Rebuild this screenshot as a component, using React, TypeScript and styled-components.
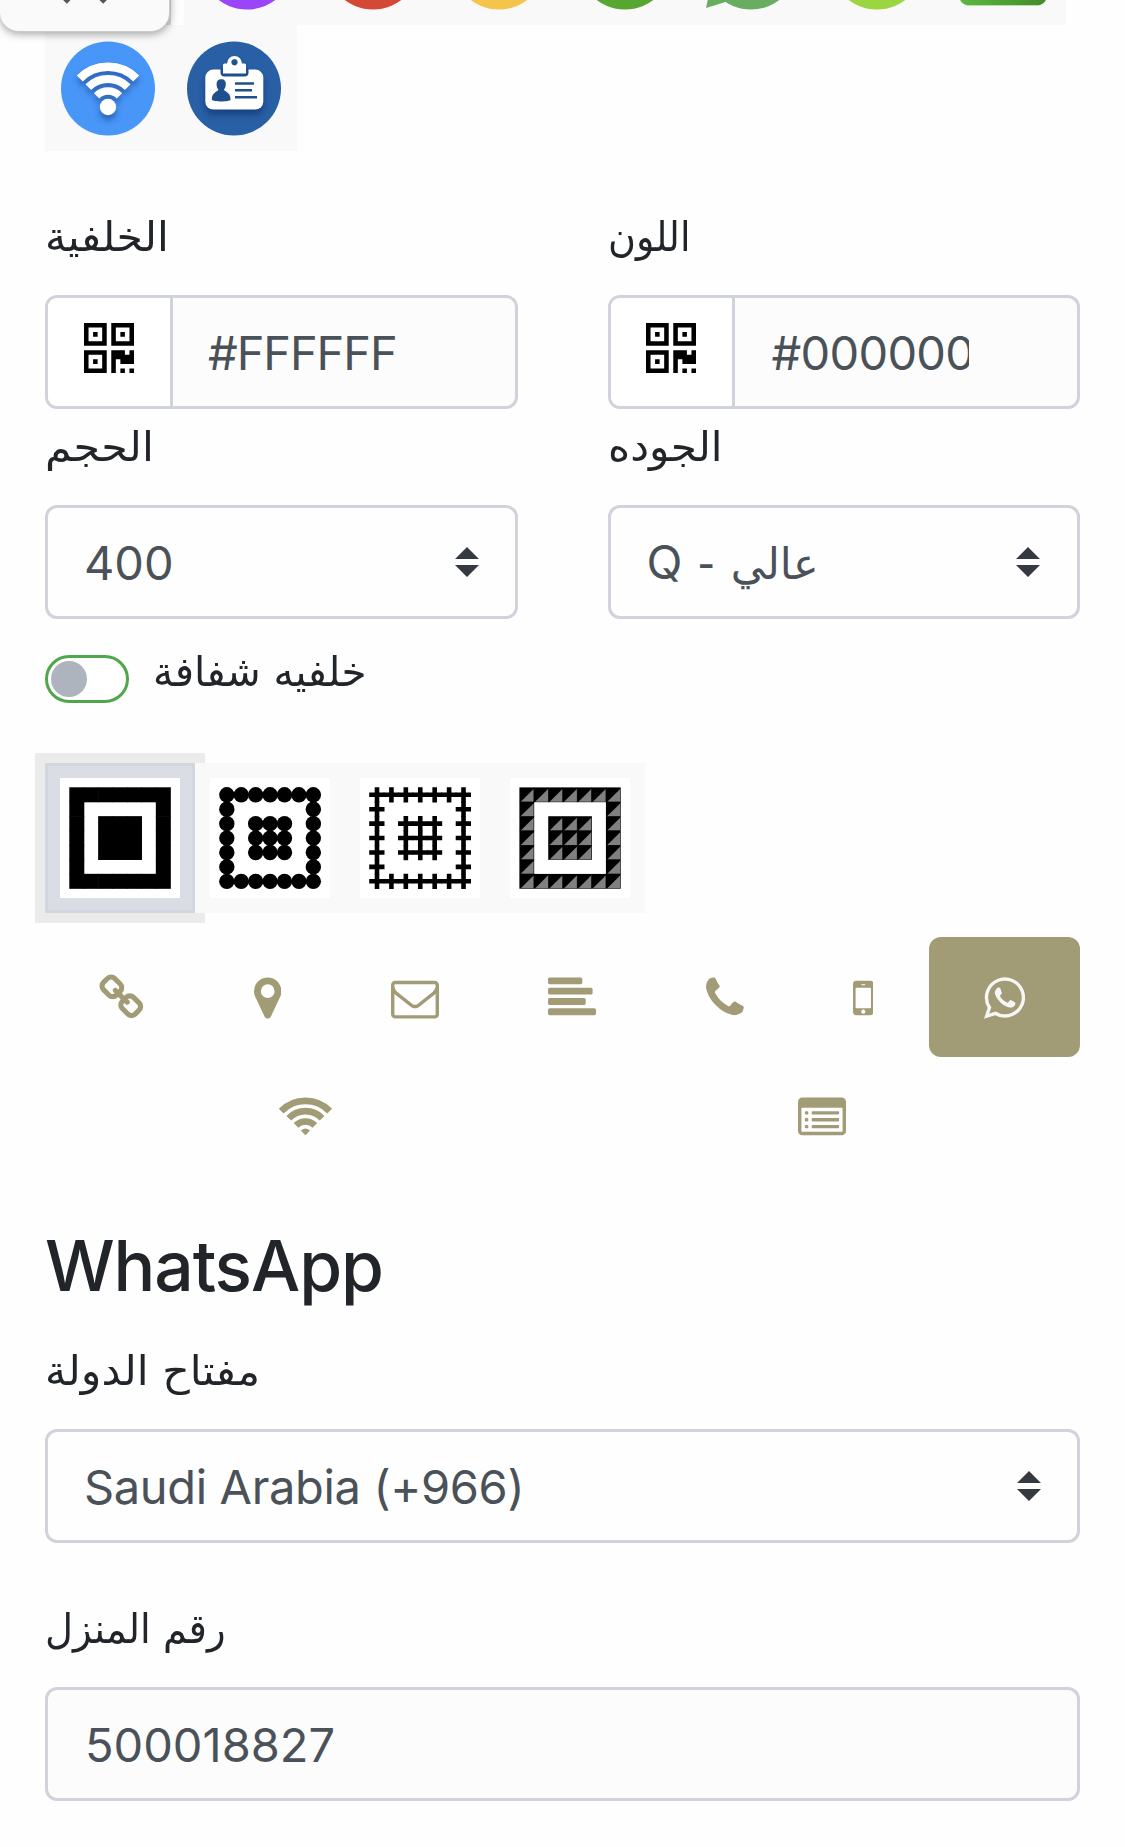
import React from "react";
import styled, { createGlobalStyle, css } from "styled-components";

const latin = `Inter, "DejaVu Sans", sans-serif`;
const arabic = `"DejaVu Sans", sans-serif`;

const GlobalStyle = createGlobalStyle`
  *, *::before, *::after { box-sizing: border-box; }
  html, body { margin: 0; padding: 0; background: #fefefe; }
  body {
    height: 1847px;
    overflow: hidden;
    color: #212529;
    font-family: ${latin};
    font-feature-settings: "calt" 0;
  }
  svg { display: block; flex: none; }
`;

const Page = styled.main`
  position: relative;
  width: 1125px;
  height: 1847px;
  overflow: hidden;
  padding: 0 45px;
`;

const FloatingPanel = styled.div`
  position: absolute;
  z-index: 2;
  left: 0;
  top: -60px;
  width: 170px;
  height: 92px;
  border-radius: 0 0 19px 19px;
  background: #fafafa;
  border-bottom: 1px solid #c9c9c9;
  border-right: 1px solid #c9c9c9;
  box-shadow: 0 2px 8px rgba(0, 0, 0, 0.36);
  display: flex;
  align-items: flex-end;
  justify-content: center;
  padding-bottom: 26px;
`;

const LogoRow = styled.div<{ $h: number }>`
  display: flex;
  height: ${(p) => p.$h}px;
  align-items: flex-end;
  overflow: hidden;
`;

const LogoTile = styled.div<{ $selected?: boolean }>`
  width: 126px;
  height: 126px;
  flex: none;
  display: flex;
  justify-content: center;
  padding-top: 16px;
  background: #f9f9f9;
  ${(p) => p.$selected && css`
    background: #dadde3;
    margin-right: 13px;
  `}
`;

const Columns = styled.div`
  display: grid;
  grid-template-columns: 1fr 1fr;
  column-gap: 90px;
`;

const Field = styled.div<{ $top: number }>`
  padding-top: ${(p) => p.$top}px;
`;

const Label = styled.label<{ $stretch?: number }>`
  display: block;
  width: max-content;
  height: 59px;
  margin-bottom: 29px;
  font: 400 41px/61px ${arabic};
  white-space: nowrap;
  transform: scaleX(${(p) => p.$stretch ?? 1});
  transform-origin: left;
`;

const Control = styled.div<{ $tinted?: boolean }>`
  display: flex;
  align-items: center;
  height: 114px;
  border: 3px solid #d0d3db;
  border-radius: 12px;
  overflow: hidden;
  background: ${(p) => (p.$tinted ? "#fcfcfc" : "#fefefe")};
  color: #4b5158;
`;

const Addon = styled.div<{ $pad?: number }>`
  width: ${(p) => 89 + (p.$pad ?? 36)}px;
  height: 100%;
  padding: 25px 0 0 ${(p) => p.$pad ?? 36}px;
  background: #fff;
  border-right: 3px solid #d0d3db;
`;

const Value = styled.span<{ $left: number; $spacing?: number; $clip?: number }>`
  margin-left: ${(p) => p.$left}px;
  padding-top: 2px;
  font: 400 47px/72px ${latin};
  letter-spacing: ${(p) => p.$spacing ?? 0}px;
  white-space: nowrap;
  ${(p) => p.$clip && css`
    width: ${p.$clip}px;
    overflow: hidden;
  `}
`;

const Ar = styled.bdi`
  font-family: ${arabic};
  font-size: 43px;
  letter-spacing: 0;
`;

const Dash = styled.span`
  margin: 0 3px 0 2px;
  font-family: ${arabic};
`;

const Caret = styled.svg<{ $right: number }>`
  margin-left: auto;
  margin-right: ${(p) => p.$right}px;
  margin-top: -1px;
`;

const SwitchRow = styled.div`
  display: flex;
  align-items: flex-start;
  height: 144px;
  padding-top: 23px;
`;

const SwitchTrack = styled.div`
  width: 84px;
  height: 48px;
  margin-top: 13px;
  border: 3px solid #50a64d;
  border-radius: 24px;
  padding: 3px;
  background: #fff;
`;

const SwitchKnob = styled.div`
  width: 36px;
  height: 36px;
  border-radius: 50%;
  background: #adb4bd;
`;

const SwitchLabel = styled.span`
  margin-left: 24px;
  font: 400 41px/61px ${arabic};
  transform: scaleX(0.987);
  transform-origin: left;
`;

const StyleRow = styled.div`
  display: flex;
  height: 150px;
`;

const StyleTile = styled.div<{ $selected?: boolean }>`
  width: 150px;
  height: 150px;
  display: grid;
  place-items: center;
  background: #f9f9f9;
  position: relative;
  ${(p) => p.$selected && css`
    background: #dadde3;
    border: 3px solid #d2d6de;
    box-shadow: 0 0 0 10px #ebebeb;
    z-index: 0;
  `}
`;

const Tabs = styled.nav`
  display: flex;
  flex-wrap: wrap;
  margin-top: 24px;
`;

const Tab = styled.div<{ $active?: boolean; $nudge?: boolean }>`
  flex: 1 1 auto;
  height: 120px;
  padding: 36.6px ${(p) => (p.$nudge ? "49px 0 47px" : "48px 0")};
  display: flex;
  justify-content: center;
  border-radius: 12px;
  color: ${(p) => (p.$active ? "#f6f6f6" : "#a29c76")};
  background: ${(p) => (p.$active ? "#a29c76" : "transparent")};
`;

const Title = styled.h2`
  margin: 46px 0 0;
  height: 88px;
  font: 500 69.5px/86px ${latin};
  letter-spacing: -1.1px;
`;

const Lifted = styled.g`
  filter: drop-shadow(0 5px 3px rgba(0, 20, 80, 0.4));
`;

const Disc = ({ color, children }: { color: string; children?: React.ReactNode }) => (
  <svg width="96" height="96" viewBox="0 0 96 96">
    <circle cx="48" cy="47.5" r="47" fill={color} />
    {children}
  </svg>
);

const ChatBubble = () => (
  <svg width="96" height="96" viewBox="0 0 96 96" fill="#69ae60">
    <circle cx="48" cy="47.5" r="47" />
    <path d="M3 93L8 70L30 83L21 87.500z" />
  </svg>
);

const GreenCard = () => (
  <svg width="96" height="96" viewBox="0 0 96 96">
    <defs>
      <linearGradient id="card" x1="0" x2="1">
        <stop offset="0" stopColor="#5cb840" />
        <stop offset="1" stopColor="#438a2b" />
      </linearGradient>
    </defs>
    <rect x="4.500" y="3" width="87" height="87.500" rx="9" fill="url(#card)" />
    <path d="M12 90.500H84" stroke="#b5e0aa" strokeWidth="1" />
  </svg>
);

const WifiBadge = () => (
  <Disc color="#4896f8">
    <Lifted fill="none" stroke="#fff">
      <path d="M19.800 37.500A40 40 0 0 1 76.200 37.500" strokeWidth="8.500" />
      <path d="M28.300 46.200A28 28 0 0 1 67.700 46.200" strokeWidth="8" />
      <path d="M36.600 54.800A16 16 0 0 1 59.400 54.800" strokeWidth="7.500" />
      <circle cx="48" cy="66" r="8.200" fill="#fff" stroke="none" />
    </Lifted>
  </Disc>
);

const IdBadge = () => (
  <Disc color="#285fa5">
    <Lifted>
      <rect x="19.300" y="28.600" width="58" height="40" rx="8" fill="#fff" />
      <path d="M34.500 27.500h28v4q0 4-4 4h-20q-4 0-4-4z" fill="#1f4f8d" />
      <path fillRule="evenodd" fill="#fff" d="M37 24q0-1.500 1.500-1.500H41q1-7.500 7.500-7.500t7.500 7.500h2.500q1.500 0 1.500 1.500v8.500H37zM48.500 18a3.200 3.200 0 1 0 .01 0z" />
    </Lifted>
    <path fill="#1f4f8d" d="M35.200 38.200c3.300 0 4.800 2 4.600 5.200 0 2.300-1 4-1.700 4.900 0 2.800 6.500 2.200 6.500 10.500-1.500 2.200-17 2.200-18.800 0 0-8.300 6.500-7.700 6.500-10.500-1-1-1.700-2.600-1.700-4.900-.2-3.200 1.300-5.200 4.600-5.200z" />
    <path stroke="#1f4f8d" strokeWidth="2.500" d="M49 42.500h19M49 49.300h17M49 56.200h22" />
  </Disc>
);

const finder = (x: number, y: number) => `M${x} ${y}h5v5h-5zM${x + 1} ${y + 1}v3h3v-3zM${x + 2} ${y + 2}h1v1h-1z`;

const QrIcon = () => (
  <svg width="50" height="50" viewBox="0 0 11 11">
    <path fillRule="evenodd" d={finder(0, 0) + finder(6, 0) + finder(0, 6)} />
    <path d="M6 6h3v1h1v-1h1v3h-3v-1h-1v3h-1zM8 10h1v1h-1zM10 10h1v1h-1z" />
  </svg>
);

const SelectCaret = ({ right = 36 }: { right?: number }) => (
  <Caret $right={right} width="24" height="30" viewBox="0 0 24 30">
    <path d="M0 12L12 0l12 12zM0 18h24L12 30z" fill="#343a40" />
  </Caret>
);

const cells = Array.from({ length: 49 }, (_, i) => [i % 7, Math.floor(i / 7)]).filter(
  ([x, y]) => Math.max(Math.abs(x - 3), Math.abs(y - 3)) !== 2
);

const drawCell: Record<string, React.ReactNode> = {
  square: <rect x="-.3" y="-.3" width="15" height="15" />,
  dot: <circle cx="7.220" cy="7.220" r="7.700" />,
  cross: <path d="M5.100-.4h4.600v5.300h5.200v4.600h-5.200v5.400h-4.600v-5.400h-5.500v-4.600h5.500z" />,
  triangle: (
    <>
      <rect x="-.2" y="-.2" width="14.800" height="14.800" />
      <path d="M1.200 14.100L14 1.400V14.100z" fill="#808080" />
    </>
  ),
};

const Eye = ({ kind }: { kind: string }) => (
  <svg width="120" height="120" viewBox="0 0 120 120">
    <rect width="120" height="120" fill="#fff" />
    {cells.map(([x, y], i) => (
      <g key={i} transform={`translate(${9.6 + x * 14.42} ${9.6 + y * 14.42})`}>
        {drawCell[kind]}
      </g>
    ))}
  </svg>
);

const Glyph = ({ units, d, x = 0 }: { units: number; d: string; x?: number }) => (
  <svg width={(units * 48) / 1792} height="48" viewBox={`${x} 0 ${units} 1792`} fill="currentColor">
    <path d={d} />
  </svg>
);

const linkPath =
  "M1520 1216q0-40-28-68l-208-208q-28-28-68-28-42 0-72 32 3 3 19 18.500t21.500 21.500 15 19 13 25.500 3.500 27.500q0 40-28 68t-68 28q-15 0-27.500-3.500t-25.500-13-19-15-21.500-21.500-18.500-19q-33 31-33 73 0 40 28 68l206 207q27 27 68 27 40 0 68-26l147-146q28-28 28-67zm-703-705q0-40-28-68l-206-207q-28-28-68-28-39 0-68 27l-147 146q-28 28-28 67 0 40 28 68l208 208q27 27 68 27 42 0 72-31-3-3-19-18.500t-21.500-21.500-15-19-13-25.500-3.500-27.500q0-40 28-68t68-28q15 0 27.500 3.500t25.500 13 19 15 21.500 21.500 18.500 19q33-31 33-73zm895 705q0 120-85 203l-147 146q-83 83-203 83-121 0-204-85l-206-207q-83-83-83-203 0-123 88-209l-88-88q-86 88-208 88-120 0-204-84l-208-208q-84-84-84-204t85-203l147-146q83-83 203-83 121 0 204 85l206 207q83 83 83 203 0 123-88 209l88 88q86-88 208-88 120 0 204 84l208 208q84 84 84 204z";
const markerPath =
  "M1152 640q0-106-75-181t-181-75-181 75-75 181 75 181 181 75 181-75 75-181zm256 0q0 109-33 179l-364 774q-16 33-47.500 52t-67.500 19-67.500-19-46.500-52l-365-774q-33-70-33-179 0-212 150-362t362-150 362 150 150 362z";
const envelopePath =
  "M1664 1504v-768q-32 36-69 66-268 206-426 338-51 43-83 67t-86.500 48.500-102.500 24.500h-2q-48 0-102.500-24.500t-86.500-48.500-83-67q-158-132-426-338-37-30-69-66v768q0 13 9.500 22.500t22.500 9.500h1472q13 0 22.500-9.500t9.500-22.500zm0-1051v-24.500l-.5-13-3-12.500-5.500-9-9-7.500-14-2.500h-1472q-13 0-22.500 9.500t-9.500 22.500q0 168 147 284 193 152 401 317 6 5 35 29.500t46 37.500 44.500 31.500 50.500 27.500 43 9h2q20 0 43-9t50.500-27.500 44.500-31.500 46-37.500 35-29.500q208-165 401-317 54-43 100.500-115.500t46.500-131.500zm128-37v1088q0 66-47 113t-113 47h-1472q-66 0-113-47t-47-113v-1088q0-66 47-113t113-47h1472q66 0 113 47t47 113z";
const phonePath =
  "M1600 1240q0 27-10 70.500t-21 68.500q-21 50-122 106-94 51-186 51-27 0-53-3.500t-57.500-12.500-47-14.500-55.500-20.500-49-18q-98-35-175-83-127-79-264-216t-216-264q-48-77-83-175-3-9-18-49t-20.500-55.500-14.500-47-12.500-57.500-3.500-53q0-92 51-186 56-101 106-122 25-11 68.500-21t70.500-10q14 0 21 3 18 6 53 76 11 19 30 54t35 63.500 31 53.500q3 4 17.500 25t21.500 35.500 7 28.500q0 20-28.500 50t-62 55-62 53-28.500 46q0 9 5 22.500t8.500 20.500 14 24 11.500 19q76 137 174 235t235 174q2 1 19 11.500t24 14 20.500 8.500 22.500 5q18 0 46-28.500t53-62 55-62 50-28.500q14 0 28.500 7t35.500 21.500 25 17.500q25 15 53.500 31t63.500 35 54 30q70 35 76 53 3 7 3 21z";
const whatsappPath =
  "M1113 974q13 0 97.500 44t89.500 53q2 5 2 15 0 33-17 76-16 39-71 65.500t-102 26.500q-57 0-190-62-98-45-170-118t-148-185q-72-107-71-194v-8q3-91 74-158 24-22 52-22 6 0 18 1.500t19 1.500q19 0 26.500 6.500t15.500 27.500q8 20 33 88t25 75q0 21-34.500 57.500t-34.500 46.500q0 7 5 15 34 73 102 137 56 53 151 101 12 7 22 7 15 0 54-48.500t52-48.500zm-203 530q127 0 243.500-50t200.500-134 134-200.500 50-243.500-50-243.500-134-200.500-200.500-134-243.500-50-243.500 50-200.500 134-134 200.500-50 243.500q0 203 120 368l-79 233 242-77q158 104 345 104zm0-1382q153 0 292.500 60t240.500 161 161 240.500 60 292.500-60 292.500-161 240.500-240.500 161-292.500 60q-195 0-365-94l-417 134 136-405q-108-178-108-389 0-153 60-292.500t161-240.500 240.500-161 292.500-60z";

const AlignLeftIcon = () => (
  <svg width="48" height="48" viewBox="0 0 48 48" fill="currentColor">
    <rect y="3.400" width="34.300" height="6.900" rx="1.700" />
    <rect y="13.700" width="44.600" height="6.900" rx="1.700" />
    <rect y="24" width="37.700" height="6.900" rx="1.700" />
    <rect y="34.300" width="48" height="6.900" rx="1.700" />
  </svg>
);

const MobileIcon = () => (
  <svg width="20.600" height="48" viewBox="0 0 20.600 48" fill="currentColor">
    <path
      fillRule="evenodd"
      d="M3.400 6.800h13.800a3.400 3.400 0 0 1 3.400 3.400v27.600a3.400 3.400 0 0 1-3.400 3.400H3.400a3.400 3.400 0 0 1-3.400-3.400V10.200a3.400 3.400 0 0 1 3.400-3.400zM8.600 10.300a.45.45 0 0 0 0 .9h3.400a.45.45 0 0 0 0-.9zM3.400 13.700q-.8 0-.8.8v18.900q0 .8.800.8h13.800q.8 0 .8-.8V14.500q0-.8-.8-.8zM10.300 35.600a2.100 2.100 0 1 0 .01 0z"
    />
  </svg>
);

const WifiIcon = () => (
  <svg width="54.900" height="48" viewBox="0 0 54.900 48" fill="none" stroke="currentColor">
    <path d="M3.200 17.100A33.800 33.800 0 0 1 51.700 17.100" strokeWidth="6.600" />
    <path d="M10.800 24.200A23.200 23.200 0 0 1 44.100 24.200" strokeWidth="6.600" />
    <path d="M18 31.400A13.300 13.300 0 0 1 36.900 31.400" strokeWidth="6.600" />
    <path d="M23.400 36q4-3.200 8.100 0 .4.400 0 .9l-3.500 3.800q-.6.600-1.100 0l-3.500-3.800q-.4-.5 0-.9z" fill="currentColor" stroke="none" />
  </svg>
);

const ListIcon = () => (
  <svg width="48" height="48" viewBox="0 0 48 48" fill="currentColor">
    <path
      fillRule="evenodd"
      d="M4.300 3.400h39.400a4.300 4.300 0 0 1 4.300 4.300v29.200a4.300 4.300 0 0 1-4.300 4.300H4.300A4.300 4.300 0 0 1 0 36.900V7.700a4.300 4.300 0 0 1 4.300-4.300zM4.200 13.700q-.8 0-.8.800v22.400q0 .8.800.8h39.600q.8 0 .8-.8V14.500q0-.8-.8-.8z"
    />
    {[17.200, 24, 30.900].map((y) => (
      <g key={y}>
        <rect x="6.900" y={y} width="3.400" height="3.400" rx=".8" />
        <rect x="13.700" y={y} width="27.400" height="3.400" rx=".8" />
      </g>
    ))}
  </svg>
);

export default function App() {
  return (
    <>
      <GlobalStyle />
      <Page>
        <FloatingPanel>
          <svg width="48" height="48" viewBox="0 0 48 48" stroke="#555" strokeWidth="6">
            <path d="M3.700 4L44.300 44.600M44.300 4L3.700 44.600" />
          </svg>
        </FloatingPanel>

        <LogoRow $h={25}>
          <LogoTile $selected />
          <LogoTile><Disc color="#9a45f8" /></LogoTile>
          <LogoTile><Disc color="#d44936" /></LogoTile>
          <LogoTile><Disc color="#f5c44a" /></LogoTile>
          <LogoTile><Disc color="#57a632" /></LogoTile>
          <LogoTile><ChatBubble /></LogoTile>
          <LogoTile><Disc color="#9bd53f" /></LogoTile>
          <LogoTile><GreenCard /></LogoTile>
        </LogoRow>
        <LogoRow $h={126}>
          <LogoTile><WifiBadge /></LogoTile>
          <LogoTile><IdBadge /></LogoTile>
        </LogoRow>

        <Columns>
          <Field $top={56}>
            <Label dir="rtl" $stretch={1.04}>الخلفية</Label>
            <Control $tinted>
              <Addon><QrIcon /></Addon>
              <Value $left={35} $spacing={-1.1}>#FFFFFF</Value>
            </Control>
          </Field>
          <Field $top={56}>
            <Label dir="rtl" $stretch={0.93}>اللون</Label>
            <Control $tinted>
              <Addon $pad={35}><QrIcon /></Addon>
              <Value $left={37} $spacing={-0.7} $clip={197}>#000000</Value>
            </Control>
          </Field>
          <Field $top={8}>
            <Label dir="rtl" $stretch={1.045}>الحجم</Label>
            <Control>
              <Value $left={36}>400</Value>
              <SelectCaret />
            </Control>
          </Field>
          <Field $top={8}>
            <Label dir="rtl" $stretch={1.03}>الجوده</Label>
            <Control>
              <Value $left={36}>Q <Dash>-</Dash> <Ar>عالي</Ar></Value>
              <SelectCaret right={37} />
            </Control>
          </Field>
        </Columns>

        <SwitchRow>
          <SwitchTrack><SwitchKnob /></SwitchTrack>
          <SwitchLabel dir="rtl">خلفيه شفافة</SwitchLabel>
        </SwitchRow>

        <StyleRow>
          <StyleTile $selected><Eye kind="square" /></StyleTile>
          <StyleTile><Eye kind="dot" /></StyleTile>
          <StyleTile><Eye kind="cross" /></StyleTile>
          <StyleTile><Eye kind="triangle" /></StyleTile>
        </StyleRow>

        <Tabs>
          <Tab $nudge><Glyph units={1664} x={64} d={linkPath} /></Tab>
          <Tab><Glyph units={1024} x={384} d={markerPath} /></Tab>
          <Tab><Glyph units={1792} d={envelopePath} /></Tab>
          <Tab $nudge><AlignLeftIcon /></Tab>
          <Tab><Glyph units={1408} x={192} d={phonePath} /></Tab>
          <Tab $nudge><MobileIcon /></Tab>
          <Tab $active><Glyph units={1536} x={128} d={whatsappPath} /></Tab>
          <Tab><WifiIcon /></Tab>
          <Tab $nudge><ListIcon /></Tab>
        </Tabs>

        <Title>WhatsApp</Title>
        <Field $top={30}>
          <Label dir="rtl" $stretch={1.04}>مفتاح الدولة</Label>
          <Control>
            <Value $left={36} $spacing={-0.35}>Saudi Arabia (+966)</Value>
            <SelectCaret />
          </Control>
        </Field>
        <Field $top={56}>
          <Label dir="rtl" $stretch={0.94}>رقم المنزل</Label>
          <Control $tinted>
            <Value $left={37}>500018827</Value>
          </Control>
        </Field>
      </Page>
    </>
  );
}
